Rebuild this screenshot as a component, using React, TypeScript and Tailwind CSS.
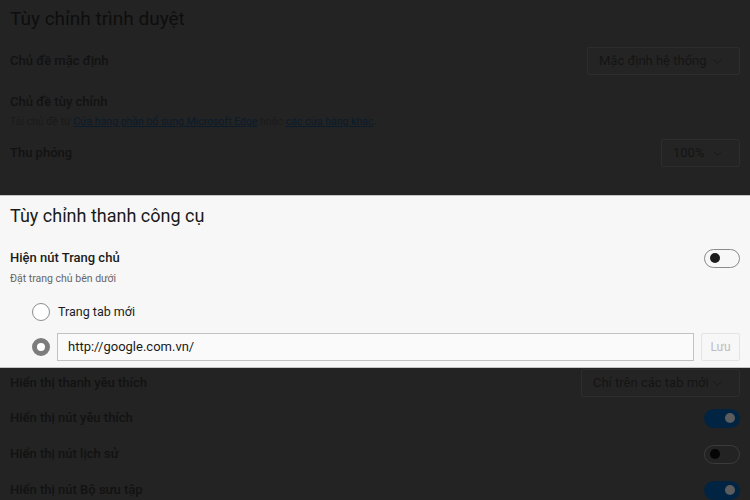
import type { FC, ReactNode } from 'react';
import { ChevronDown } from 'lucide-react';

const Select: FC<{ label: string; width: string }> = ({ label, width }) => (
  <div
    className={`flex h-[28px] items-center justify-between whitespace-nowrap rounded-[2px] border border-[#2d2d2d] bg-[#242424] pl-[11px] pr-[14px] text-[13px] text-[#141414] ${width}`}
  >
    <span>{label}</span>
    <ChevronDown size={15} strokeWidth={1.3} className="text-[#161616]" />
  </div>
);

const Toggle: FC<{ on?: boolean; dim?: boolean }> = ({ on, dim }) => {
  if (on) {
    return (
      <div className="flex h-[19px] w-[36px] items-center justify-end rounded-full bg-[#022443] pr-[5px]">
        <span className="h-[10px] w-[10px] rounded-full bg-[#5c5c5c]" />
      </div>
    );
  }
  return (
    <div
      className={`flex h-[19px] w-[36px] items-center rounded-full border pl-[5px] ${
        dim ? 'border-[#3b3b3b]' : 'border-[#8a8a8a]'
      }`}
    >
      <span className={`h-[10px] w-[10px] rounded-full ${dim ? 'bg-[#050505]' : 'bg-[#1b1b1b]'}`} />
    </div>
  );
};

const DimRow: FC<{ label: string; height: string; children?: ReactNode }> = ({ label, height, children }) => (
  <div className={`flex items-center justify-between ${height}`}>
    <span className="text-[13px] font-medium text-[#121212]">{label}</span>
    {children}
  </div>
);

export default function App() {
  return (
    <div className="h-[500px] w-[750px] overflow-hidden bg-[#232323] font-['Roboto',sans-serif]">
      {/* appearance settings, dimmed */}
      <section className="h-[195px] px-[10px]">
        <h1 className="flex h-[38px] items-center text-[19px] text-[#0e0e0e]">Tùy chỉnh trình duyệt</h1>
        <DimRow label="Chủ đề mặc định" height="h-[46px]">
          <Select label="Mặc định hệ thống" width="w-[153px]" />
        </DimRow>
        <div className="flex flex-col gap-[3px] pt-[9px]">
          <span className="text-[13px] font-medium leading-[18px] text-[#121212]">Chủ đề tùy chỉnh</span>
          <p className="text-[10.5px] leading-[16px] text-[#1a1a1a]">
            Tải chủ đề từ{' '}
            <span className="text-[#0a1b2c] underline">Cửa hàng phần bổ sung Microsoft Edge</span> hoặc{' '}
            <span className="text-[#0a1b2c] underline">các cửa hàng khác</span>.
          </p>
        </div>
        <DimRow label="Thu phóng" height="h-[42px] mt-[2px]">
          <Select label="100%" width="w-[79px]" />
        </DimRow>
      </section>

      {/* toolbar settings, highlighted */}
      <section className="h-[173px] border-y border-[#c4c4c4] bg-[#f7f7f7] px-[10px]">
        <h2 className="flex h-[38px] items-center text-[18px] text-[#1a1a1a]">Tùy chỉnh thanh công cụ</h2>
        <div className="mt-[13px] flex h-[22px] items-center justify-between">
          <span className="text-[13px] font-medium text-[#1b1b1b]">Hiện nút Trang chủ</span>
          <Toggle />
        </div>
        <p className="mt-[1px] text-[10.5px] leading-[18px] text-[#666666]">Đặt trang chủ bên dưới</p>
        <div className="mt-[8px] flex h-[32px] items-center gap-[8px] pl-[22px]">
          <span className="h-[18px] w-[18px] rounded-full border border-[#8c8c8c] bg-white" />
          <span className="text-[12.5px] text-[#1b1b1b]">Trang tab mới</span>
        </div>
        <div className="mt-[5px] flex h-[28px] items-center gap-[7px] pl-[22px]">
          <span className="h-[18px] w-[18px] rounded-full border-[5px] border-[#7c7c7c] bg-white" />
          <div className="flex h-[28px] flex-1 items-center border border-[#c2c2c2] bg-[#fafafa] px-[10px] text-[13px] text-[#1b1b1b]">
            http://google.com.vn/
          </div>
          <button className="h-[28px] w-[39px] rounded-[2px] border border-[#e4e4e4] text-[12px] text-[#bdbdbd]">
            Lưu
          </button>
        </div>
      </section>

      {/* toolbar buttons, dimmed */}
      <section className="px-[10px]">
        <DimRow label="Hiển thị thanh yêu thích" height="h-[30px]">
          <Select label="Chỉ trên các tab mới" width="w-[159px]" />
        </DimRow>
        <div className="pt-[2px]">
          <DimRow label="Hiển thị nút yêu thích" height="h-[36px]">
            <Toggle on />
          </DimRow>
          <DimRow label="Hiển thị nút lịch sử" height="h-[36px]">
            <Toggle dim />
          </DimRow>
          <DimRow label="Hiển thị nút Bộ sưu tập" height="h-[36px]">
            <Toggle on />
          </DimRow>
        </div>
      </section>
    </div>
  );
}
